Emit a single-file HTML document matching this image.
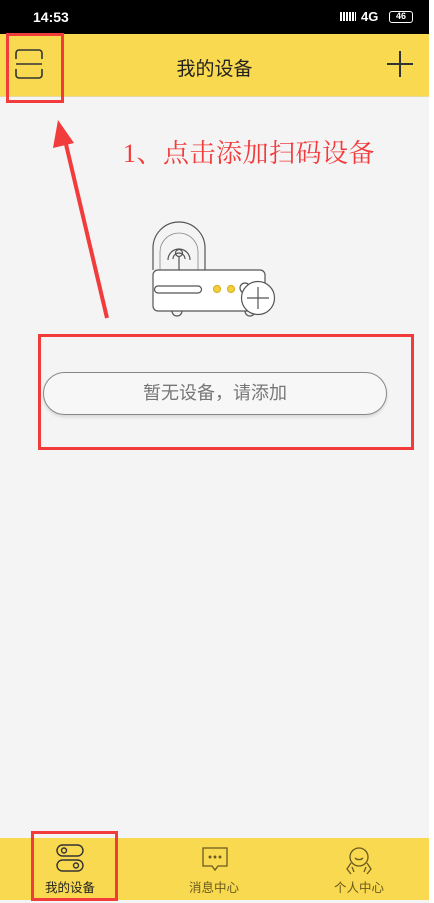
<!DOCTYPE html>
<html><head><meta charset="utf-8"><style>
*{margin:0;padding:0;box-sizing:border-box}
body{width:434px;height:903px;overflow:hidden;background:#fff;font-family:"Liberation Sans","Noto Sans CJK SC",sans-serif;position:relative}
.main{position:absolute;left:0;top:0;width:429px;height:903px;background:#f4f4f5}
.status{position:absolute;left:0;top:0;width:429px;height:34px;background:#000;color:#fff}
.header{position:absolute;left:0;top:34px;width:429px;height:63px;background:#f9d94f;border-bottom:1px solid #e6d9a0}
.title{position:absolute;left:0;width:429px;top:20px;text-align:center;font-size:19px;color:#222}
.tab{position:absolute;left:0;top:838px;width:429px;height:62px;background:#f9d94f}
.tl{position:absolute;font-size:12.5px;top:39px;text-align:center;width:90px}
.red{position:absolute;border:3px solid #f23b3b}
</style></head><body>
<div class="main">
<div class="status">
 <div style="position:absolute;left:33px;top:9px;font-size:14px;font-weight:bold">14:53</div>
 <div style="position:absolute;left:340px;top:12px;width:16px;height:9px;background:repeating-linear-gradient(90deg,#fff 0 2px,transparent 2px 3px)"></div>
 <div style="position:absolute;left:361px;top:9px;font-size:13px;font-weight:bold">4G</div>
 <div style="position:absolute;left:389px;top:11px;width:24px;height:12px;border:1.5px solid #fff;border-radius:3px;font-size:9px;line-height:9px;text-align:center;font-weight:bold">46</div>
</div>
<div class="header">
 <svg style="position:absolute;left:14px;top:14px" width="30" height="32" viewBox="0 0 30 32" fill="none" stroke="#333" stroke-width="1.6"><path d="M2 11V5a3 3 0 0 1 3-3h20a3 3 0 0 1 3 3v6M2 16h26M2 21v6a3 3 0 0 0 3 3h20a3 3 0 0 0 3-3v-6"/></svg>
 <div class="title">我的设备</div>
 <svg style="position:absolute;left:386px;top:16px" width="28" height="28" stroke="#333" stroke-width="2"><path d="M14 1v26M1 14h26"/></svg>
</div>
<div style="position:absolute;left:123px;top:133px;font-family:'Liberation Serif','Noto Serif CJK SC',serif;font-size:26px;color:#f23b3b;letter-spacing:0.5px">1、点击添加扫码设备</div>
<svg style="position:absolute;left:0;top:0" width="434" height="903"><path d="M107 318 L65 140" stroke="#f23b3b" stroke-width="4"/><path d="M58 120 L53 148 L74 143 Z" fill="#f23b3b"/></svg>
<svg style="position:absolute;left:148px;top:220px" width="130" height="104" viewBox="0 0 130 104" fill="none" stroke="#555" stroke-width="1.2">
 <path d="M5 50V28a26 26 0 0 1 52 0V50"/><path d="M12 50V32a19 19 0 0 1 38 0V50" stroke="#888" stroke-width="0.8"/><path d="M20 40a11 11 0 0 1 22 0"/><path d="M25 39a6 6 0 0 1 12 0"/>
 <circle cx="31" cy="33" r="3.5"/><path d="M31 37v13"/>
 <rect x="5" y="50" width="112" height="41" rx="5" fill="#fff"/>
 <path d="M10 66h40a3.5 3.5 0 0 1 0 7H10a3.5 3.5 0 0 1 0-7z"/>
 <circle cx="69" cy="69" r="3.5" fill="#f5cf3b" stroke="#d9b52a"/><circle cx="83" cy="69" r="3.5" fill="#f5cf3b" stroke="#d9b52a"/>
 <circle cx="97" cy="68" r="5"/>
 <path d="M24 91a5 5 0 0 0 10 0M97 91a5 5 0 0 0 10 0"/>
 <circle cx="110" cy="78" r="16.5" fill="#fff"/><path d="M110 67v22M99 78h22"/>
</svg>
<div style="position:absolute;left:43px;top:372px;width:344px;height:43px;border:1.3px solid #888;border-radius:22px;background:#f7f7f8;box-shadow:0 2px 3px rgba(0,0,0,.12);text-align:center;line-height:41px;font-size:18px;color:#777">暂无设备，请添加</div>
<div class="tab">
 <svg style="position:absolute;left:56px;top:6px" width="28" height="28" viewBox="0 0 28 28" fill="none" stroke="#333" stroke-width="1.4"><rect x="1" y="1" width="26" height="11" rx="5.5"/><circle cx="8" cy="6.5" r="2.5"/><rect x="1" y="16" width="26" height="11" rx="5.5"/><circle cx="20" cy="21.5" r="2.5"/></svg>
 <div class="tl" style="left:25px;color:#222">我的设备</div>
 <svg style="position:absolute;left:202px;top:9px" width="26" height="28" viewBox="0 0 26 28" fill="none" stroke="#6a5a1e" stroke-width="1.3"><path d="M1 1h24v18H16l-3 4-3-4H1z"/><circle cx="8" cy="10" r=".8" fill="#6a5a1e"/><circle cx="13" cy="10" r=".8" fill="#6a5a1e"/><circle cx="18" cy="10" r=".8" fill="#6a5a1e"/></svg>
 <div class="tl" style="left:169px;color:#6a5a1e">消息中心</div>
 <svg style="position:absolute;left:344px;top:8px" width="30" height="30" viewBox="0 0 30 30" fill="none" stroke="#6a5a1e" stroke-width="1.3"><circle cx="15" cy="11" r="9"/><path d="M11 12a5 4 0 0 0 8 0M7 17l-4 6 4 5M23 17l4 6-4 5M10 26l-2-5M20 26l2-5"/></svg>
 <div class="tl" style="left:314px;color:#6a5a1e">个人中心</div>
</div>
</div>
<div class="red" style="left:6px;top:33px;width:58px;height:70px"></div>
<div class="red" style="left:38px;top:334px;width:376px;height:116px"></div>
<div class="red" style="left:31px;top:831px;width:87px;height:70px"></div>
</body></html>
